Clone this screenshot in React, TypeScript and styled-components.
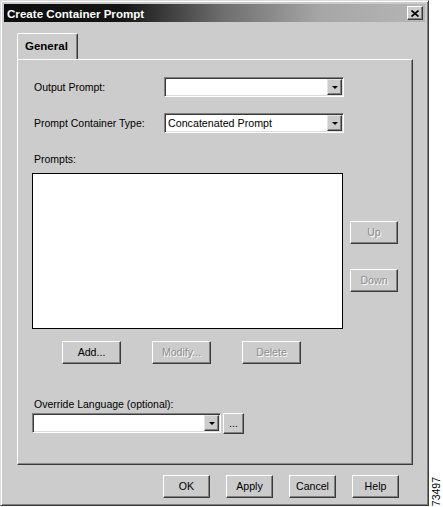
import React from 'react';
import styled, { createGlobalStyle } from 'styled-components';

const Global = createGlobalStyle`
  html, body { margin: 0; padding: 0; background: #fff; }
  body {
    font-family: "Liberation Sans", Arial, sans-serif;
    font-size: 10.5px;
    color: #000;
  }
  * { box-sizing: border-box; }
`;

const Page = styled.div`
  display: flex;
  width: 443px;
  height: 507px;
`;

const Window = styled.div`
  width: 429px;
  height: 506px;
  background: #cccccc;
  border: 1px solid;
  border-color: #dcdcdc #3a3a3a #3a3a3a #dcdcdc;
  box-shadow: inset 1px 1px #ffffff, inset -1px -1px #808080;
  padding: 3px;
  display: flex;
  flex-direction: column;
`;

const TitleBar = styled.div`
  height: 18px;
  display: flex;
  align-items: center;
  justify-content: space-between;
  padding: 0 2px 0 3px;
  background: linear-gradient(to right, #0c0c0c 0%, #151515 28%, #6e6e6e 52%, #a6a6a6 75%, #b6b6b6 100%);
`;

const TitleText = styled.span`
  color: #fff;
  font-weight: bold;
  font-size: 11.6px;
  letter-spacing: 0;
`;

const CloseButton = styled.div`
  width: 16px;
  height: 14px;
  background: #cccccc;
  border: 1px solid;
  border-color: #fff #3a3a3a #3a3a3a #fff;
  box-shadow: inset -1px -1px #808080;
  display: flex;
  align-items: center;
  justify-content: center;
`;

const TabStrip = styled.div`
  display: flex;
  margin: 11px 0 0 13px;
  height: 26px;
`;

const Tab = styled.div`
  position: relative;
  z-index: 1;
  width: 61px;
  height: 26px;
  margin-bottom: -1px;
  background: #cccccc;
  border-top: 1px solid #fff;
  border-left: 1px solid #fff;
  border-right: 1px solid #3a3a3a;
  border-radius: 2px 2px 0 0;
  box-shadow: inset -1px 0 #808080;
  padding: 6px 0 0 7px;
  font-weight: bold;
  font-size: 11.5px;
`;

const Panel = styled.div`
  margin: 0 12px 0 13px;
  height: 406px;
  border: 1px solid;
  border-color: #fff #3a3a3a #3a3a3a #fff;
  box-shadow: inset -1px -1px #8a8a8a;
  padding: 17px 0 0 14px;
  display: flex;
  flex-direction: column;
`;

const FieldRow = styled.div<{ $top: number }>`
  display: grid;
  grid-template-columns: 132px 180px;
  align-items: center;
  height: 20px;
  margin-top: ${p => p.$top}px;
`;

const Label = styled.div<{ $top?: number }>`
  padding-left: 2px;
  line-height: 13px;
  margin-top: ${p => p.$top ?? 0}px;
`;

const Combo = styled.div<{ $w: number }>`
  width: ${p => p.$w}px;
  height: 20px;
  background: #fff;
  border: 1px solid;
  border-color: #808080 #fff #fff #808080;
  box-shadow: inset 1px 1px #3a3a3a, inset -1px -1px #dcdcdc;
  padding: 2px 2px 2px 3px;
  display: flex;
  align-items: center;
`;

const ComboText = styled.span`
  flex: 1;
  font-size: 10.7px;
  white-space: nowrap;
`;

const DropButton = styled.div`
  width: 15px;
  height: 16px;
  margin-right: -1px;
  background: #cccccc;
  border: 1px solid;
  border-color: #e4e4e4 #3a3a3a #3a3a3a #e4e4e4;
  box-shadow: inset -1px -1px #808080;
  display: flex;
  align-items: center;
  justify-content: center;
`;

const Arrow = styled.div`
  width: 0;
  height: 0;
  border-left: 3px solid transparent;
  border-right: 3px solid transparent;
  border-top: 3px solid #000;
  margin-top: 1px;
`;

const ListRow = styled.div`
  display: flex;
  gap: 7px;
  margin-top: 7px;
`;

const ListBox = styled.div`
  width: 311px;
  height: 156px;
  background: #fff;
  border: 1px solid #000;
`;

const SideButtons = styled.div`
  display: flex;
  flex-direction: column;
  gap: 25px;
  padding-top: 48px;
`;

const Button = styled.div<{ $w: number; $h?: number; $disabled?: boolean }>`
  width: ${p => p.$w}px;
  height: ${p => p.$h ?? 23}px;
  background: #cccccc;
  border: 1px solid;
  border-color: #fff #3a3a3a #3a3a3a #fff;
  box-shadow: inset -1px -1px #808080;
  display: flex;
  align-items: center;
  justify-content: center;
  font-size: 10.6px;
  padding-bottom: 1px;
  color: ${p => (p.$disabled ? '#8c8c8c' : '#000')};
  text-shadow: ${p => (p.$disabled ? '1px 1px 0 #fff' : 'none')};
`;

const ActionRow = styled.div`
  display: flex;
  gap: 31px;
  margin-top: 12px;
  padding-left: 30px;
`;

const LangRow = styled.div`
  display: flex;
  gap: 2px;
  margin-top: 2px;
`;

const Footer = styled.div`
  display: flex;
  justify-content: flex-end;
  gap: 16px;
  margin-top: 10px;
  padding-right: 26px;
`;

const Side = styled.div`
  flex: 1;
  display: flex;
  flex-direction: column;
  justify-content: flex-end;
  padding: 0 0 1px 2px;
`;

const FigureNumber = styled.span`
  writing-mode: vertical-rl;
  transform: rotate(180deg);
  font-size: 10.5px;
  line-height: 11px;
`;

const CloseIcon = () => (
  <svg width="8" height="7" viewBox="0 0 8 7">
    <path d="M0.5 0.5 L7.5 6.5 M7.5 0.5 L0.5 6.5" stroke="#000" strokeWidth="1.7" fill="none" />
  </svg>
);

const ComboBox: React.FC<{ w: number; value?: string }> = ({ w, value }) => (
  <Combo $w={w}>
    <ComboText>{value ?? ''}</ComboText>
    <DropButton>
      <Arrow />
    </DropButton>
  </Combo>
);

export default function App() {
  return (
    <Page>
      <Global />
      <Window>
        <TitleBar>
          <TitleText>Create Container Prompt</TitleText>
          <CloseButton>
            <CloseIcon />
          </CloseButton>
        </TitleBar>
        <TabStrip>
          <Tab>General</Tab>
        </TabStrip>
        <Panel>
          <FieldRow $top={0}>
            <Label>Output Prompt:</Label>
            <ComboBox w={180} />
          </FieldRow>
          <FieldRow $top={16}>
            <Label>Prompt Container Type:</Label>
            <ComboBox w={180} value="Concatenated Prompt" />
          </FieldRow>
          <Label $top={20}>Prompts:</Label>
          <ListRow>
            <ListBox />
            <SideButtons>
              <Button $w={48} $disabled>Up</Button>
              <Button $w={48} $disabled>Down</Button>
            </SideButtons>
          </ListRow>
          <ActionRow>
            <Button $w={59}>Add...</Button>
            <Button $w={59} $disabled>Modify...</Button>
            <Button $w={59} $disabled>Delete</Button>
          </ActionRow>
          <Label $top={34}>Override Language (optional):</Label>
          <LangRow>
            <ComboBox w={189} />
            <Button $w={21} $h={21}>...</Button>
          </LangRow>
        </Panel>
        <Footer>
          <Button $w={47}>OK</Button>
          <Button $w={47}>Apply</Button>
          <Button $w={47}>Cancel</Button>
          <Button $w={47}>Help</Button>
        </Footer>
      </Window>
      <Side>
        <FigureNumber>73497</FigureNumber>
      </Side>
    </Page>
  );
}
